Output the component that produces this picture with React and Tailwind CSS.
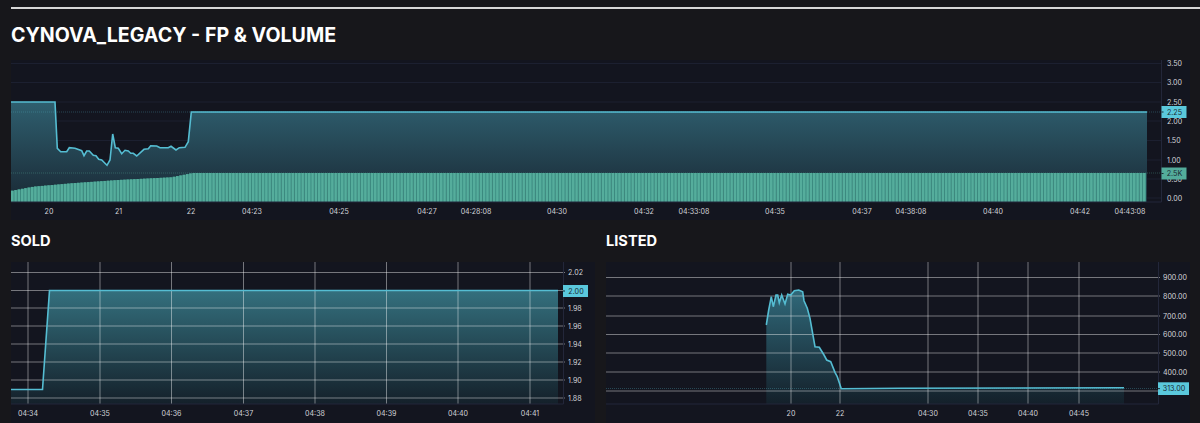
const fontStack = "Inter, 'Liberation Sans', sans-serif";

const fpLine =
  "11,102 55,102 57.3,148.3 60.7,151.7 66.7,151.7 69.3,147.7 75,148.3 81.7,150.7 84,155.7 86.7,151 89.3,151 93.3,155.3 96,155.7 98.7,159.3 101.7,160 107,165.3 110,160 112.7,134 115.3,147.7 118.3,148.3 121.7,153.7 125,150.3 128.3,151 130.7,153.3 133.3,153.3 136.7,156 144,149.3 148.3,148.7 150.7,145.7 156.7,146 160,147.7 168.3,147.7 171,146.3 176,150 179.3,147.7 185,147.3 188.3,141.7 191.3,112 1147,112";

const soldLine = "11,389.5 42.5,389.5 49.5,290.5 558,290.5";

const listedLine =
  "766.3,325 768.7,310 771.3,296.7 773.3,306.7 776,295 777.7,295 779.3,302.7 781.7,295 785,304 787.7,294.3 790.7,295 794.3,290.7 798.7,290 802.7,291.7 804,300.7 807.3,308.3 810,318.3 815,346.7 819.3,347.3 824,355 826.7,360 830.7,361.7 835,372.3 837.3,376.7 841.3,388.7 900,388.3 1124,387.8";

const topTimes = [
  ["20", 49],
  ["21", 118.5],
  ["22", 191],
  ["04:23", 252],
  ["04:25", 339],
  ["04:27", 427],
  ["04:28:08", 476],
  ["04:30", 557],
  ["04:32", 644],
  ["04:33:08", 694],
  ["04:35", 775],
  ["04:37", 862],
  ["04:38:08", 911],
  ["04:40", 993],
  ["04:42", 1080],
  ["04:43:08", 1130],
];
const topPrices = [
  ["3.50", 63.5],
  ["3.00", 82.5],
  ["2.50", 102],
  ["2.00", 121],
  ["1.50", 140.5],
  ["1.00", 160],
  ["0.50", 179],
  ["0.00", 198],
];

const soldTimes = ["04:34", "04:35", "04:36", "04:37", "04:38", "04:39", "04:40", "04:41"];
const soldX = [28, 100, 171.5, 243.5, 315, 386.5, 458, 530];
const soldPrices = [
  ["2.02", 272.5],
  ["1.98", 308],
  ["1.96", 326],
  ["1.94", 344],
  ["1.92", 362],
  ["1.90", 380],
  ["1.88", 398],
];

const listedTimes = [
  ["20", 791],
  ["22", 840],
  ["04:30", 928],
  ["04:35", 978],
  ["04:40", 1028],
  ["04:45", 1079],
];
const listedPrices = [
  ["900.00", 277.5],
  ["800.00", 296],
  ["700.00", 316],
  ["600.00", 334.5],
  ["500.00", 353],
  ["400.00", 372],
];

// volume bar top, climbs until the 22 mark and stays flat after
const barSteps = [
  [11, 190.7],
  [32, 186.7],
  [70, 183.3],
  [117, 180],
  [170, 177.3],
  [190, 173.3],
];
function barTop(x) {
  if (x >= 190) return 173;
  for (let i = 1; i < barSteps.length; i++) {
    const [x0, y0] = barSteps[i - 1];
    const [x1, y1] = barSteps[i];
    if (x <= x1) return y0 + ((x - x0) / (x1 - x0)) * (y1 - y0);
  }
  return 173;
}

const bars = [];
for (let x = 11; x < 1146; x += 3.3) bars.push(x);

function Tag({ x, y, w, h = 12, fill, label }) {
  return (
    <g>
      <rect x={x} y={y} width={w} height={h} fill={fill} />
      <line x1={x} x2={x + 2} y1={y + h / 2} y2={y + h / 2} stroke="#1b2b33" />
      <text x={x + w / 2 + 0.5} y={y + h / 2 + 2.6} textAnchor="middle" fontSize="7.2" fill="#1b2b33">
        {label}
      </text>
    </g>
  );
}

function AxisText({ x, y, anchor = "start", children }) {
  return (
    <text x={x} y={y} textAnchor={anchor} fontSize="7.1" fill="#d2d4d9">
      {children}
    </text>
  );
}

function TopChart() {
  return (
    <svg viewBox="11 60 1179 160" className="block w-full h-[160px] bg-[#13151f]" style={{ fontFamily: fontStack }}>
      <defs>
        <linearGradient id="fpFill" gradientUnits="userSpaceOnUse" x1="0" y1="100" x2="0" y2="200">
          <stop offset="0" stopColor="#2f6070" />
          <stop offset="1" stopColor="#1a2a36" />
        </linearGradient>
      </defs>
      {[63.5, 82.5, 102, 121, 140.5, 160, 179, 198].map((y) => (
        <line key={y} x1="11" x2="1161" y1={y} y2={y} stroke="#1c2030" />
      ))}
      <polygon points={`${fpLine} 1147,202 11,202`} fill="url(#fpFill)" />
      <polyline points={fpLine} fill="none" stroke="#55bdd2" strokeWidth="1.6" />
      <line x1="11" x2="1161" y1="112" y2="112" stroke="#55bdd2" strokeOpacity=".3" strokeDasharray="1 1" />
      <line x1="11" x2="1161" y1="173" y2="173" stroke="#55ad9c" strokeOpacity=".35" strokeDasharray="1 1" />
      {bars.map((x) => (
        <rect key={x} x={x} y={barTop(x)} width="3.3" height={202 - barTop(x)} fill="#3d8f84" />
      ))}
      {bars.map((x) => (
        <rect key={x} x={x} y={barTop(x)} width="2.4" height={202 - barTop(x)} fill="#55ad9c" />
      ))}
      <line x1="1161.5" x2="1161.5" y1="60" y2="202" stroke="#23273a" />
      <line x1="11" x2="1161.5" y1="202" y2="202" stroke="#23273a" />
      {topTimes.map(([t, x]) => (
        <AxisText key={t} x={x} y={213.5} anchor="middle">
          {t}
        </AxisText>
      ))}
      {topPrices.map(([p, y]) => (
        <AxisText key={p} x={1167} y={y + 2.5}>
          {p}
        </AxisText>
      ))}
      <Tag x={1161.5} y={106} w={25} fill="#5ac8dc" label="2.25" />
      <Tag x={1161.5} y={167.5} w={25} fill="#53ac9b" label="2.5K" />
    </svg>
  );
}

function SoldChart() {
  return (
    <svg viewBox="11 262 584 161" className="block w-full h-[161px] bg-[#13151f]" style={{ fontFamily: fontStack }}>
      <defs>
        <linearGradient id="soldFill" gradientUnits="userSpaceOnUse" x1="0" y1="290" x2="0" y2="404">
          <stop offset="0" stopColor="#34707e" />
          <stop offset="1" stopColor="#14202a" />
        </linearGradient>
      </defs>
      <polygon points={`${soldLine} 558,404 11,404`} fill="url(#soldFill)" />
      {[272.5, 290.5, 308, 326, 344, 362, 380, 398].map((y) => (
        <line key={y} x1="11" x2="565" y1={y} y2={y} stroke="#ffffff" strokeOpacity=".42" />
      ))}
      {soldX.map((x) => (
        <line key={x} x1={x} x2={x} y1="262" y2="404" stroke="#ffffff" strokeOpacity=".42" />
      ))}
      <polyline points={soldLine} fill="none" stroke="#55bdd2" strokeWidth="1.6" />
      <line x1="563.5" x2="563.5" y1="262" y2="404" stroke="#23273a" />
      <line x1="11" x2="563.5" y1="404" y2="404" stroke="#23273a" />
      {soldTimes.map((t, i) => (
        <AxisText key={t} x={soldX[i]} y={415.5} anchor="middle">
          {t}
        </AxisText>
      ))}
      {soldPrices.map(([p, y]) => (
        <AxisText key={p} x={568} y={y + 2.5}>
          {p}
        </AxisText>
      ))}
      <Tag x={563} y={285} w={25} fill="#5ac8dc" label="2.00" />
    </svg>
  );
}

function ListedChart() {
  return (
    <svg viewBox="606 262 584 161" className="block w-full h-[161px] bg-[#13151f]" style={{ fontFamily: fontStack }}>
      <defs>
        <linearGradient id="listedFill" gradientUnits="userSpaceOnUse" x1="0" y1="290" x2="0" y2="404">
          <stop offset="0" stopColor="#30697a" />
          <stop offset="1" stopColor="#14202a" />
        </linearGradient>
      </defs>
      <polygon points={`${listedLine} 1124,404 766.3,404`} fill="url(#listedFill)" />
      {[277.5, 296, 316, 334.5, 353, 372, 391].map((y) => (
        <line key={y} x1="606" x2="1160" y1={y} y2={y} stroke="#ffffff" strokeOpacity=".42" />
      ))}
      {listedTimes.map(([t, x]) => (
        <line key={t} x1={x} x2={x} y1="262" y2="404" stroke="#ffffff" strokeOpacity=".42" />
      ))}
      <line x1="606" x2="1158" y1="388.5" y2="388.5" stroke="#55bdd2" strokeOpacity=".3" strokeDasharray="1 1" />
      <polyline points={listedLine} fill="none" stroke="#55bdd2" strokeWidth="1.6" />
      <line x1="1158.5" x2="1158.5" y1="262" y2="404" stroke="#23273a" />
      <line x1="606" x2="1158.5" y1="404" y2="404" stroke="#23273a" />
      {listedTimes.map(([t, x]) => (
        <AxisText key={t} x={x} y={415.5} anchor="middle">
          {t}
        </AxisText>
      ))}
      {listedPrices.map(([p, y]) => (
        <AxisText key={p} x={1163} y={y + 2.5}>
          {p}
        </AxisText>
      ))}
      <Tag x={1158} y={382.3} w={31} h={12.7} fill="#5ac8dc" label="313.00" />
    </svg>
  );
}

export default function App() {
  return (
    <div className="h-[423px] overflow-hidden bg-[#17171b] pl-[11px] pt-[7px] font-['Inter','Liberation_Sans',sans-serif] text-white">
      <div className="h-[2px] bg-[#d8d8d8]" />

      <h1 className="mt-[14px] h-[37px] text-[19.6px] leading-[24px] font-bold">CYNOVA_LEGACY - FP &amp; VOLUME</h1>

      <div className="w-[1179px]">
        <TopChart />

        <div className="grid grid-cols-2 gap-x-[11px] mt-[11px]">
          <section>
            <h2 className="h-[31px] text-[14.6px] leading-[20px] font-bold">SOLD</h2>
            <SoldChart />
          </section>
          <section>
            <h2 className="h-[31px] text-[14.6px] leading-[20px] font-bold">LISTED</h2>
            <ListedChart />
          </section>
        </div>
      </div>
    </div>
  );
}
